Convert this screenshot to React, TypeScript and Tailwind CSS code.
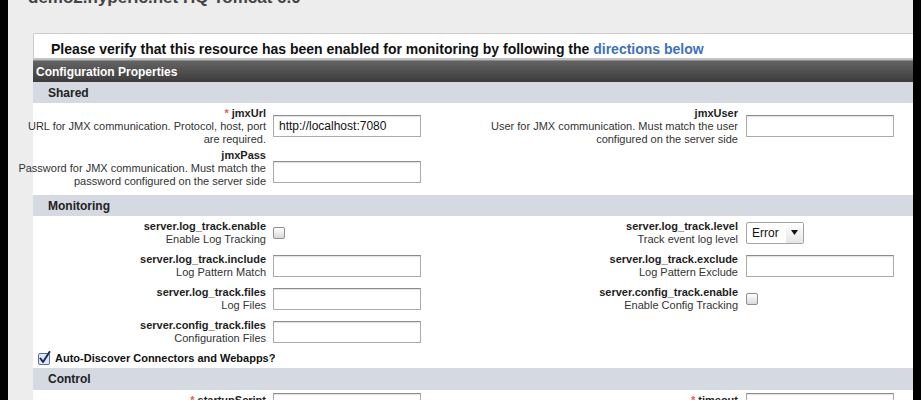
import React from "react";

const Input = ({ value }: { value?: string }) => (
  <div className="w-[148px] h-[22px] bg-white border border-[#ababab] border-t-[#8c8c8c] shadow-[inset_0_1px_1px_rgba(0,0,0,0.12)] text-[12px] leading-[20px] pl-[5px] text-[#111] whitespace-nowrap overflow-hidden">
    {value}
  </div>
);

const Check = () => (
  <div className="w-[12px] h-[12px] rounded-[2px] border border-[#8f8f8f] bg-linear-to-b from-white to-[#d9d9d9]" />
);

const Checked = () => (
  <svg width="14" height="14" viewBox="0 0 14 14">
    <rect x="0.5" y="2.5" width="11" height="11" rx="1.5" fill="#dfe8f6" stroke="#5a6e96" />
    <path d="M2.5 7.5 L5 11 L11.5 1" fill="none" stroke="#1d2b55" strokeWidth="2" strokeLinecap="round" strokeLinejoin="round" />
  </svg>
);

const Select = () => (
  <div className="w-[58px] h-[22px] border border-[#a3a3a3] rounded-[2px] bg-white flex items-stretch text-[12px] text-[#111]">
    <span className="flex-1 pl-[5px] leading-[20px]">Error</span>
    <div className="w-[17px] flex items-center justify-center bg-linear-to-b from-white to-[#e6e6e6]">
      <svg width="7" height="5" viewBox="0 0 7 5">
        <path d="M0 0 H7 L3.5 5 Z" fill="#111" />
      </svg>
    </div>
  </div>
);

const Label = ({ name, desc, req }: { name: string; desc: string[]; req?: boolean }) => (
  <div className="flex flex-col items-end text-right whitespace-nowrap">
    <div className="text-[11px] font-bold leading-[14px] text-[#1e1e1e]">
      {req && <span className="text-[#e0605a] mr-[3px]">*</span>}
      {name}
    </div>
    {desc.map((d, i) => (
      <div key={i} className="text-[11px] leading-[13px] text-[#333]">
        {d}
      </div>
    ))}
  </div>
);

const SectionHeader = ({ title, h }: { title: string; h: string }) => (
  <div className={`${h} bg-[#d5d9e1] pl-[15px] flex items-center text-[12px] font-bold text-[#222]`}>{title}</div>
);

const rowGrid = "grid grid-cols-[236px_204px_269px_171px]";

export default function App() {
  return (
    <div className="w-[921px] h-[400px] overflow-hidden bg-[#000000] flex font-[Liberation_Sans,Arial,sans-serif]">
      <div className="w-[8px] h-[400px] shrink-0 bg-[#000000]" />
      <div className="w-[905px] h-[400px] shrink-0 overflow-hidden bg-[#ededed] flex flex-col">
        <div className="h-[20px] -mt-[12px] pl-[20px] text-[17px] leading-[20px] font-bold text-[#444] whitespace-nowrap">
          demo2.hyperic.net HQ Tomcat 6.0
        </div>
        <div className="w-[880px] ml-[25px] mt-[25px] flex flex-col">
          <div className="h-[27px] bg-white border-t border-l border-[#cdcdcd] border-b-2 border-b-[#c2c2c2] pl-[17px] pt-[7px] text-[14px] leading-[16px] font-bold text-[#111] whitespace-nowrap">
            Please verify that this resource has been enabled for monitoring by following the{" "}
            <span className="text-[#3d72b8]">directions below</span>
          </div>
          <div className="h-[22px] border-t border-t-[#8a8a8a] bg-linear-to-b from-[#646464] to-[#3c3c3c] pl-[3px] flex items-center text-[12px] font-bold text-white">
            Configuration Properties
          </div>
          <SectionHeader title="Shared" h="h-[21px]" />
          <div className="bg-white">
            <div className={`h-[45px] ${rowGrid} items-center`}>
              <div className="flex justify-end pr-[3px]">
                <Label req name="jmxUrl" desc={["URL for JMX communication. Protocol, host, port", "are required."]} />
              </div>
              <div className="pl-[4px]">
                <Input value="http://localhost:7080" />
              </div>
              <div className="flex justify-end pr-[4px]">
                <Label name="jmxUser" desc={["User for JMX communication. Must match the user", "configured on the server side"]} />
              </div>
              <div className="pl-[4px]">
                <Input />
              </div>
            </div>
            <div className={`h-[47px] ${rowGrid} items-start`}>
              <div className="flex justify-end pr-[3px]">
                <Label name="jmxPass" desc={["Password for JMX communication. Must match the", "password configured on the server side"]} />
              </div>
              <div className="pl-[4px] mt-[13px]">
                <Input />
              </div>
              <div />
              <div />
            </div>
          </div>
          <SectionHeader title="Monitoring" h="h-[21px]" />
          <div className="bg-white">
            <div className={`h-[33px] ${rowGrid} items-center`}>
              <div className="flex justify-end pr-[3px]">
                <Label name="server.log_track.enable" desc={["Enable Log Tracking"]} />
              </div>
              <div className="pl-[4px]">
                <Check />
              </div>
              <div className="flex justify-end pr-[4px]">
                <Label name="server.log_track.level" desc={["Track event log level"]} />
              </div>
              <div className="pl-[4px]">
                <Select />
              </div>
            </div>
            <div className={`h-[33px] ${rowGrid} items-center`}>
              <div className="flex justify-end pr-[3px]">
                <Label name="server.log_track.include" desc={["Log Pattern Match"]} />
              </div>
              <div className="pl-[4px]">
                <Input />
              </div>
              <div className="flex justify-end pr-[4px]">
                <Label name="server.log_track.exclude" desc={["Log Pattern Exclude"]} />
              </div>
              <div className="pl-[4px]">
                <Input />
              </div>
            </div>
            <div className={`h-[33px] ${rowGrid} items-center`}>
              <div className="flex justify-end pr-[3px]">
                <Label name="server.log_track.files" desc={["Log Files"]} />
              </div>
              <div className="pl-[4px]">
                <Input />
              </div>
              <div className="flex justify-end pr-[4px]">
                <Label name="server.config_track.enable" desc={["Enable Config Tracking"]} />
              </div>
              <div className="pl-[4px]">
                <Check />
              </div>
            </div>
            <div className={`h-[33px] ${rowGrid} items-center`}>
              <div className="flex justify-end pr-[3px]">
                <Label name="server.config_track.files" desc={["Configuration Files"]} />
              </div>
              <div className="pl-[4px]">
                <Input />
              </div>
              <div />
              <div />
            </div>
            <div className="h-[20px] flex items-center pl-[5px] gap-[3px]">
              <Checked />
              <span className="text-[11px] font-bold text-[#111]">Auto-Discover Connectors and Webapps?</span>
            </div>
          </div>
          <SectionHeader title="Control" h="h-[22px]" />
          <div className="bg-white h-[40px]">
            <div className={`${rowGrid} items-start pt-[3px]`}>
              <div className="flex justify-end pr-[3px]">
                <Label req name="startupScript" desc={["Script to start the server"]} />
              </div>
              <div className="pl-[4px]">
                <Input />
              </div>
              <div className="flex justify-end pr-[4px]">
                <Label req name="timeout" desc={["Timeout of control operations"]} />
              </div>
              <div className="pl-[4px]">
                <Input />
              </div>
            </div>
          </div>
        </div>
      </div>
      <div className="w-[8px] h-[400px] shrink-0 bg-[#000000]" />
    </div>
  );
}
